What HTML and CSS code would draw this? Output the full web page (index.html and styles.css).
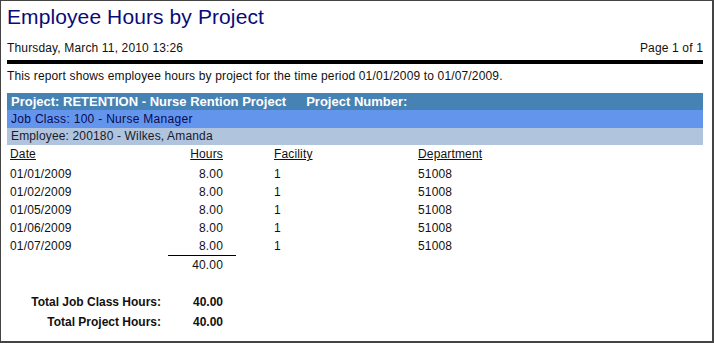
FILE: index.html
```html
<!DOCTYPE html>
<html>
<head>
<meta charset="utf-8">
<link rel="stylesheet" href="styles.css">
</head>
<body>
<div class="frame">
  <h1 class="title">Employee Hours by Project</h1>
  <div class="meta">
    <span>Thursday, March 11, 2010 13:26</span>
    <span>Page 1 of 1</span>
  </div>
  <div class="rule"></div>
  <p class="desc">This report shows employee hours by project for the time period 01/01/2009 to 01/07/2009.</p>
  <div class="bar bar-project"><span>Project: RETENTION - Nurse Rention Project</span><span class="pnum">Project Number:</span></div>
  <div class="bar bar-class">Job Class: 100 - Nurse Manager</div>
  <div class="bar bar-emp">Employee: 200180 - Wilkes, Amanda</div>
  <div class="grid">
    <div class="hd">Date</div><div class="hd num"><span>Hours</span></div><div class="hd fac">Facility</div><div class="hd">Department</div>
    <div>01/01/2009</div><div class="num">8.00</div><div class="fac">1</div><div>51008</div>
    <div>01/02/2009</div><div class="num">8.00</div><div class="fac">1</div><div>51008</div>
    <div>01/05/2009</div><div class="num">8.00</div><div class="fac">1</div><div>51008</div>
    <div>01/06/2009</div><div class="num">8.00</div><div class="fac">1</div><div>51008</div>
    <div>01/07/2009</div><div class="num">8.00</div><div class="fac">1</div><div>51008</div>
    <div></div><div class="num sum">40.00</div><div></div><div></div>
  </div>
  <div class="totals">
    <div class="lbl">Total Job Class Hours:</div><div class="val">40.00</div>
    <div class="lbl">Total Project Hours:</div><div class="val">40.00</div>
  </div>
</div>
</body>
</html>
```
FILE: styles.css
```css
html, body {
  margin: 0;
  padding: 0;
  background: #fff;
}
body {
  font-family: "Liberation Sans", Arial, sans-serif;
  font-size: 12px;
  letter-spacing: 0.15px;
  color: #111;
}
.frame {
  width: 714px;
  height: 343px;
  box-sizing: border-box;
  border-left: 1px solid #444;
  border-top: 1px solid #444;
  border-right: 2px solid #444;
  border-bottom: 2px solid #444;
  padding: 4px 9px 0 6px;
  overflow: hidden;
}
.title {
  margin: 0;
  font-size: 21px;
  font-weight: normal;
  line-height: 24px;
  letter-spacing: 0.1px;
  color: #0a0a78;
}
.meta {
  display: flex;
  justify-content: space-between;
  margin-top: 11px;
  line-height: 16px;
}
.rule {
  height: 4px;
  background: #000;
  margin-top: 4px;
}
.desc {
  margin: 4px 0 0;
  line-height: 16px;
}
.bar {
  padding-left: 4px;
  display: flex;
}
.bar-project {
  margin-top: 9px;
  height: 17px;
  line-height: 17px;
  background: #4682b4;
  color: #fff;
  font-weight: bold;
  font-size: 13px;
  letter-spacing: 0;
}
.pnum {
  margin-left: 20px;
}
.bar-class {
  height: 18px;
  line-height: 18px;
  background: #6495ed;
  color: #0a0a50;
  letter-spacing: 0.3px;
}
.bar-emp {
  height: 17px;
  line-height: 17px;
  background: #b0c4de;
  color: #1a1a2a;
}
.grid {
  display: grid;
  grid-template-columns: 158px 68px 182px 1fr;
  padding-left: 3px;
  line-height: 18px;
}
.grid .hd {
  text-decoration: underline;
  margin-bottom: 2px;
}
.grid .num {
  text-align: right;
  padding-right: 13px;
}
.grid .fac {
  padding-left: 38px;
}
.grid .sum {
  border-top: 1px solid #000;
}
.totals {
  display: grid;
  grid-template-columns: 151px 62px;
  padding-left: 3px;
  margin-top: 18px;
  line-height: 20px;
  font-weight: bold;
  letter-spacing: 0;
}
.totals .lbl {
  text-align: right;
}
.totals .val {
  text-align: right;
}
```
